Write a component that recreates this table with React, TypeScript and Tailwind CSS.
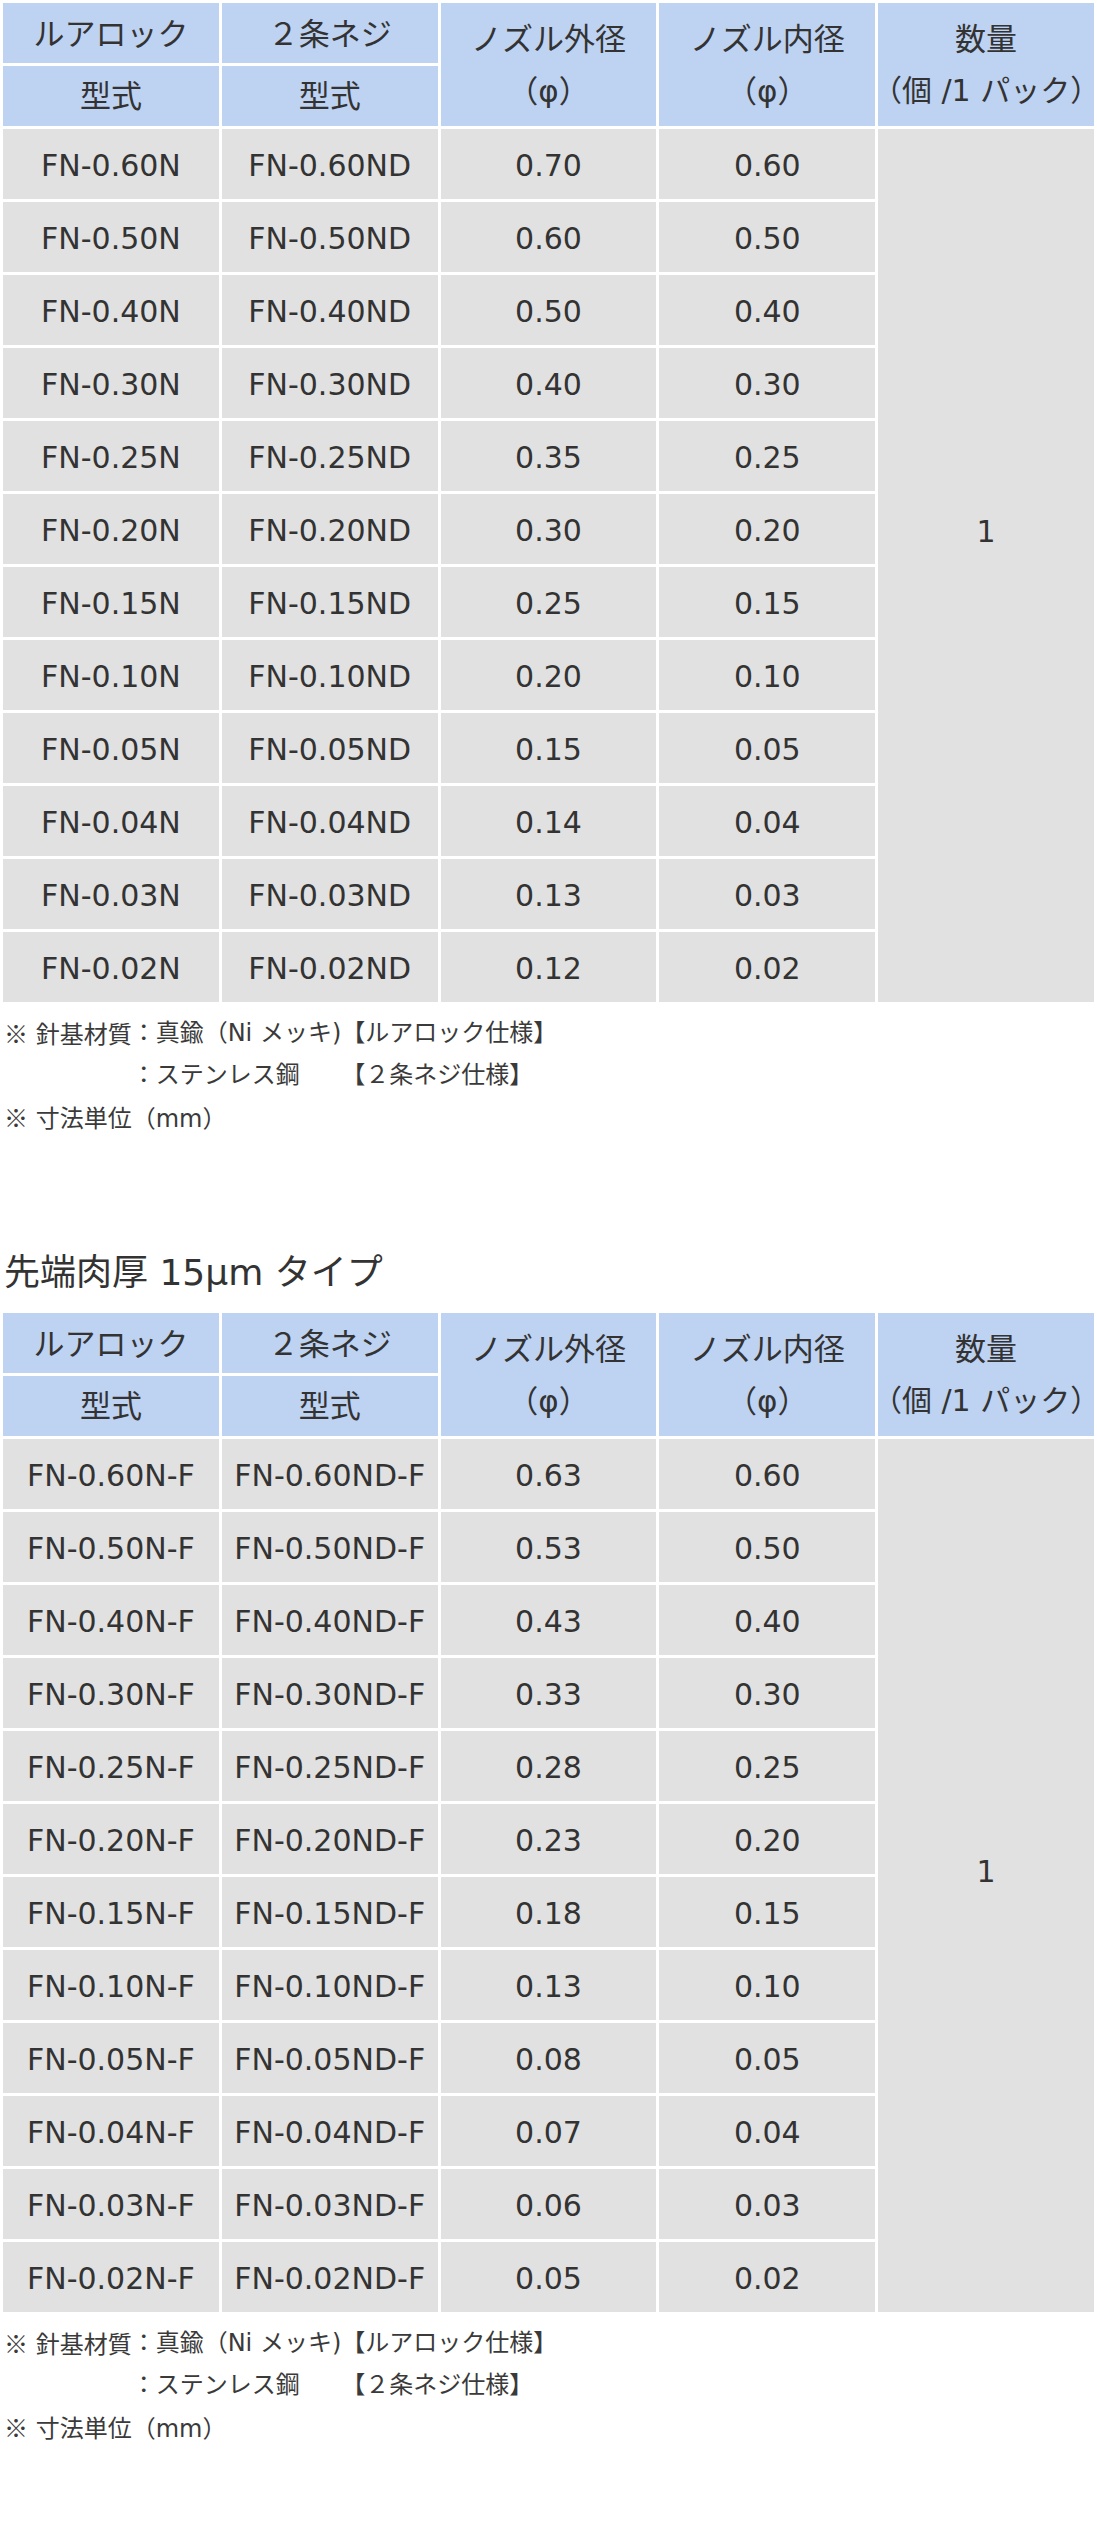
import React from "react";

const table1: string[][] = [
  ["FN-0.60N", "FN-0.60ND", "0.70", "0.60"],
  ["FN-0.50N", "FN-0.50ND", "0.60", "0.50"],
  ["FN-0.40N", "FN-0.40ND", "0.50", "0.40"],
  ["FN-0.30N", "FN-0.30ND", "0.40", "0.30"],
  ["FN-0.25N", "FN-0.25ND", "0.35", "0.25"],
  ["FN-0.20N", "FN-0.20ND", "0.30", "0.20"],
  ["FN-0.15N", "FN-0.15ND", "0.25", "0.15"],
  ["FN-0.10N", "FN-0.10ND", "0.20", "0.10"],
  ["FN-0.05N", "FN-0.05ND", "0.15", "0.05"],
  ["FN-0.04N", "FN-0.04ND", "0.14", "0.04"],
  ["FN-0.03N", "FN-0.03ND", "0.13", "0.03"],
  ["FN-0.02N", "FN-0.02ND", "0.12", "0.02"],
];

const table2: string[][] = [
  ["FN-0.60N-F", "FN-0.60ND-F", "0.63", "0.60"],
  ["FN-0.50N-F", "FN-0.50ND-F", "0.53", "0.50"],
  ["FN-0.40N-F", "FN-0.40ND-F", "0.43", "0.40"],
  ["FN-0.30N-F", "FN-0.30ND-F", "0.33", "0.30"],
  ["FN-0.25N-F", "FN-0.25ND-F", "0.28", "0.25"],
  ["FN-0.20N-F", "FN-0.20ND-F", "0.23", "0.20"],
  ["FN-0.15N-F", "FN-0.15ND-F", "0.18", "0.15"],
  ["FN-0.10N-F", "FN-0.10ND-F", "0.13", "0.10"],
  ["FN-0.05N-F", "FN-0.05ND-F", "0.08", "0.05"],
  ["FN-0.04N-F", "FN-0.04ND-F", "0.07", "0.04"],
  ["FN-0.03N-F", "FN-0.03ND-F", "0.06", "0.03"],
  ["FN-0.02N-F", "FN-0.02ND-F", "0.05", "0.02"],
];

const head =
  "bg-[#bed2f2] flex flex-col items-center justify-center text-[31px] whitespace-nowrap";
const cell =
  "bg-[#e1e1e1] flex items-center justify-center text-[30px] leading-[40px] pt-[4px] whitespace-nowrap";

function SpecTable({ rows, qtyClass }: { rows: string[][]; qtyClass: string }) {
  return (
    <div className="grid grid-cols-5 grid-rows-[60px_60px_repeat(12,70px)] gap-[3px] p-[3px]">
      <div className={`${head} leading-[45px] pt-[3px] col-start-1 row-start-1`}>ルアロック</div>
      <div className={`${head} leading-[45px] pt-[3px] col-start-2 row-start-1`}>２条ネジ</div>
      <div className={`${head} leading-[52px] col-start-3 row-start-1 row-span-2`}>
        <span>ノズル外径</span>
        <span>（φ）</span>
      </div>
      <div className={`${head} leading-[52px] col-start-4 row-start-1 row-span-2`}>
        <span>ノズル内径</span>
        <span>（φ）</span>
      </div>
      <div className={`${head} leading-[52px] col-start-5 row-start-1 row-span-2`}>
        <span>数量</span>
        <span className="text-[30px]">（個 /1 パック）</span>
      </div>
      <div className={`${head} leading-[45px] pt-[1px] col-start-1 row-start-2`}>型式</div>
      <div className={`${head} leading-[45px] pt-[1px] col-start-2 row-start-2`}>型式</div>
      <div
        className={`bg-[#e1e1e1] flex items-center justify-center text-[30px] leading-[40px] col-start-5 row-start-3 row-span-12 ${qtyClass}`}
      >
        1
      </div>
      {rows.map((r, i) => (
        <React.Fragment key={i}>
          {r.map((v, j) => (
            <div
              key={j}
              className={cell}
              style={{ gridRowStart: i + 3, gridColumnStart: j + 1 }}
            >
              {v}
            </div>
          ))}
        </React.Fragment>
      ))}
    </div>
  );
}

const cjk = "font-['Noto_Sans_CJK_JP',sans-serif]";

function Notes() {
  return (
    <div className="mt-[7px] pl-[4px] text-[24px] leading-[42px] text-[#3a3a3a]">
      <div className="grid grid-cols-[auto_auto_1fr] whitespace-nowrap">
        <span className="h-[42px]">
          <span className={cjk}>※</span> 針基材質
        </span>
        <span className="h-[42px]">：真鍮（Ni メッキ)</span>
        <span className="h-[42px]">【ルアロック仕様】</span>
        <span className="h-[42px]"></span>
        <span className="h-[42px]">：ステンレス鋼</span>
        <span className="h-[42px]">【２条ネジ仕様】</span>
      </div>
      <div className="h-[42px] whitespace-nowrap">
        <span className={cjk}>※</span> 寸法単位（mm）
      </div>
    </div>
  );
}

export default function App() {
  return (
    <div className="w-[1097px] min-h-[2540px] bg-white text-[#333333] font-['DejaVu_Sans','Noto_Sans_CJK_JP',sans-serif]">
      <SpecTable rows={table1} qtyClass="pb-[68px]" />
      <Notes />
      <h2 className="mt-[108px] pl-[4px] text-[36px] leading-[54px] font-normal whitespace-nowrap">
        先端肉厚 15μm タイプ
      </h2>
      <div className="mt-[10px]">
        <SpecTable rows={table2} qtyClass="pb-[8px]" />
      </div>
      <Notes />
    </div>
  );
}
